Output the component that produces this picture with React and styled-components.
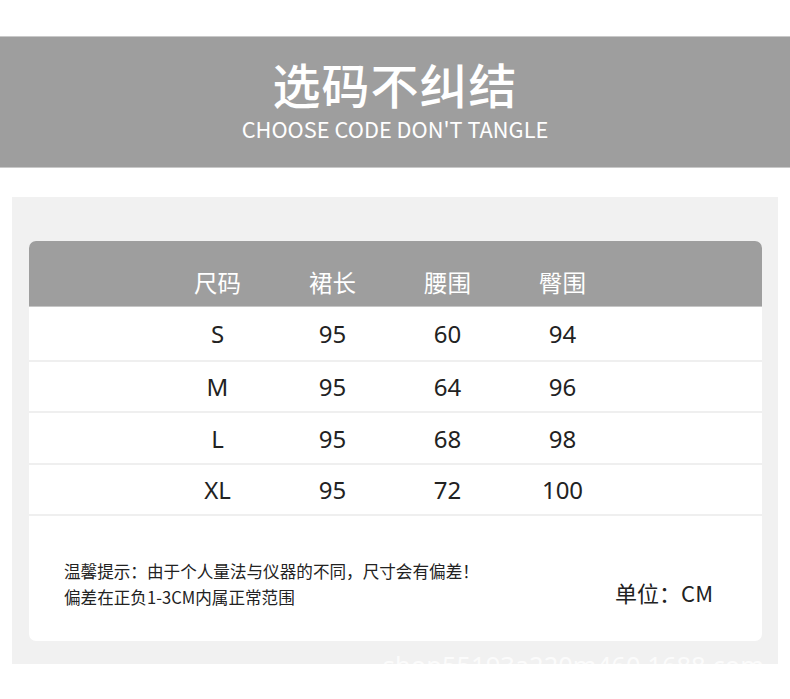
import styled, { createGlobalStyle } from "styled-components";

const GlobalStyle = createGlobalStyle`
    body{
        margin: 0;
        background: #ffffff;
        font-family: "Noto Sans", "Noto Sans CJK SC", sans-serif;
    }
`

const Page = styled.div`
    width: 790px;
    height: 699px;
    overflow: hidden;
    padding-top: 36px;
    box-sizing: border-box;
`

const Banner = styled.div`
    height: 130px;
    background-color: #9e9e9e;
    border-top: 1px solid #c9c9c9;
    border-bottom: 1px solid #c9c9c9;
    display: flex;
    flex-direction: column;
    align-items: center;
    color: #ffffff;
    font-family: "Noto Sans CJK SC", sans-serif;

    h1{
        margin: 14px 0 0;
        font-size: 48px;
        font-weight: 500;
        line-height: 64px;
        letter-spacing: 1px;
    }

    p{
        margin: 0;
        font-size: 21.8px;
        line-height: 28px;
        font-weight: 400;
    }
`

const Panel = styled.div`
    margin: 29px 12px 0;
    height: 467px;
    background-color: #f1f1f1;
    padding: 44px 16px 0 17px;
    box-sizing: border-box;
    position: relative;
    overflow: hidden;
`

const Card = styled.div`
    background: #ffffff;
    border-radius: 7px;
    overflow: hidden;
    height: 400px;
`

const Row = styled.div`
    display: grid;
    grid-template-columns: repeat(4, 115px);
    padding-left: 131px;
    height: ${p => p.$h}px;
    align-items: center;
    border-bottom: 2px solid #efefef;
    box-sizing: border-box;
    font-size: 24px;
    color: #222;

    span{
        text-align: center;
    }
`

const HeadRow = styled(Row)`
    background-color: #9e9e9e;
    color: #ffffff;
    border-bottom: 1px solid #c6c6c6;
    align-items: end;
    padding-bottom: 7px;
    font-family: "Noto Sans CJK SC", sans-serif;
    font-size: 23.5px;
`

const Footer = styled.div`
    display: flex;
    align-items: center;
    justify-content: space-between;
    padding: 42px 49px 0 35px;
    font-family: "Noto Sans CJK SC", sans-serif;
    color: #222;

    .notes p{
        margin: 0;
        font-size: 16.6px;
        line-height: 26px;
    }

    .unit{
        font-size: 22px;
        margin-top: 16px;
    }
`

const Watermark = styled.div`
    position: absolute;
    right: 14px;
    bottom: -18px;
    font-size: 25.5px;
    color: rgba(255,255,255,0.75);
`

const sizes = [
    ["S", 95, 60, 94],
    ["M", 95, 64, 96],
    ["L", 95, 68, 98],
    ["XL", 95, 72, 100],
]
const heights = [55, 51, 52, 51]

export default function App() {
    return (
        <Page>
            <GlobalStyle/>
            <Banner>
                <h1>选码不纠结</h1>
                <p>CHOOSE CODE DON'T TANGLE</p>
            </Banner>
            <Panel>
                <Card>
                    <HeadRow $h={66}>
                        <span>尺码</span>
                        <span>裙长</span>
                        <span>腰围</span>
                        <span>臀围</span>
                    </HeadRow>
                    {sizes.map((r, i) => (
                        <Row key={r[0]} $h={heights[i]}>
                            {r.map((v, j) => <span key={j}>{v}</span>)}
                        </Row>
                    ))}
                    <Footer>
                        <div className="notes">
                            <p>温馨提示：由于个人量法与仪器的不同，尺寸会有偏差！</p>
                            <p>偏差在正负1-3CM内属正常范围</p>
                        </div>
                        <div className="unit">单位：CM</div>
                    </Footer>
                </Card>
                <Watermark>shop55193a220m460.1688.com</Watermark>
            </Panel>
        </Page>
    );
}
